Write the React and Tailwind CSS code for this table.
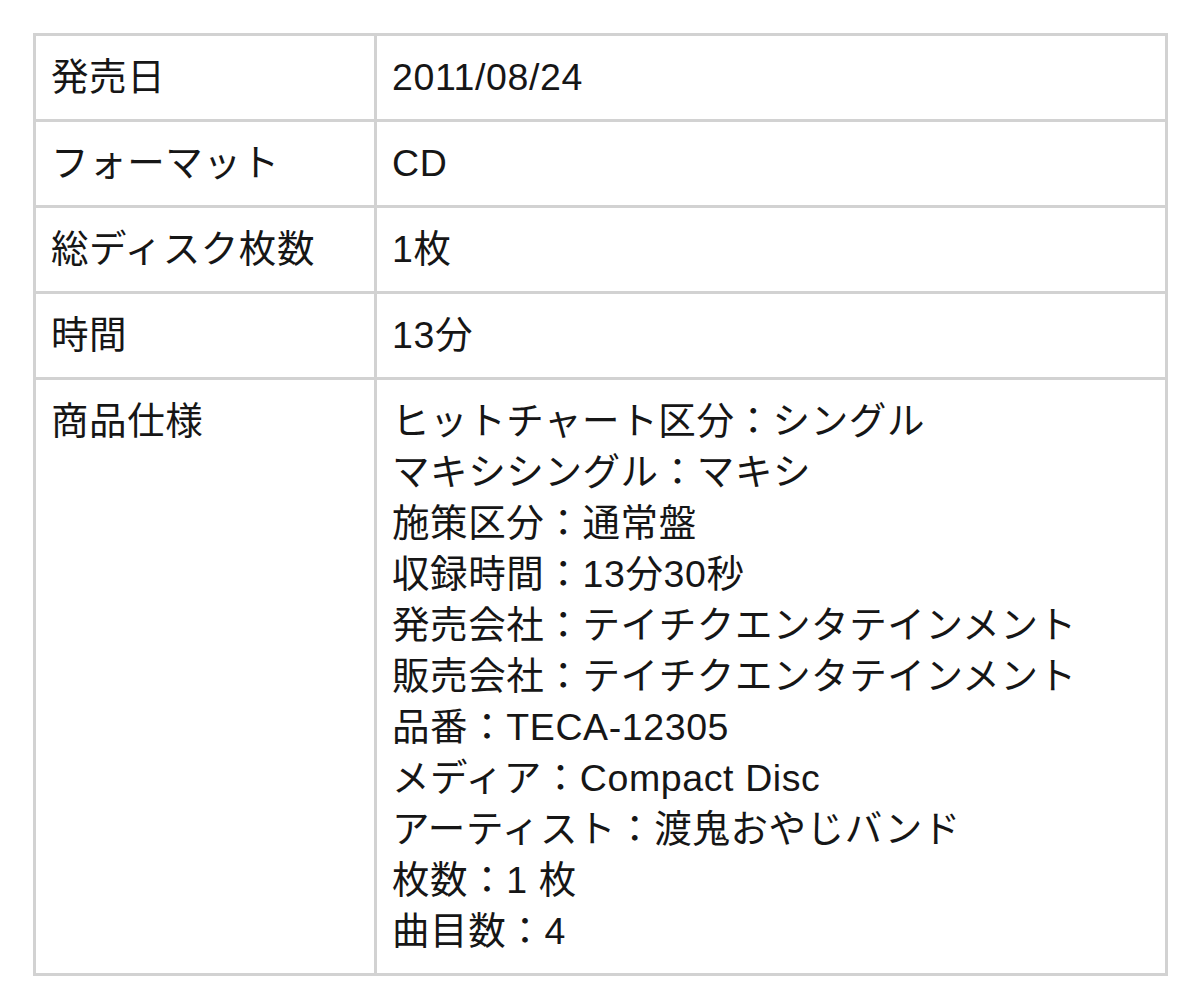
import React from 'react';

const rows = [
  ['発売日', ['2011/08/24']],
  ['フォーマット', ['CD']],
  ['総ディスク枚数', ['1枚']],
  ['時間', ['13分']],
  [
    '商品仕様',
    [
      'ヒットチャート区分：シングル',
      'マキシシングル：マキシ',
      '施策区分：通常盤',
      '収録時間：13分30秒',
      '発売会社：テイチクエンタテインメント',
      '販売会社：テイチクエンタテインメント',
      '品番：TECA-12305',
      'メディア：Compact Disc',
      'アーティスト：渡鬼おやじバンド',
      '枚数：1 枚',
      '曲目数：4',
    ],
  ],
];

const App = () => {
  return (
    <div
      className="bg-white w-[1200px] h-[999px] pt-[33px] pl-[33px] text-[#161616]"
      style={{ fontFamily: '"Liberation Sans", "Noto Sans CJK JP", sans-serif' }}
    >
      <table className="w-[1135px] border-collapse border-[3px] border-[#d2d2d2]">
        <tbody>
          {rows.map(([label, values]) => (
            <tr key={label}>
              <td className="w-[341px] align-top border-[3px] border-[#d2d2d2] pl-[15px] pr-4 py-4 text-[37.5px] leading-[51px] tracking-[0.6px]">
                {label}
              </td>
              <td className="align-top border-[3px] border-[#d2d2d2] pl-[15px] pr-4 py-4 text-[37.5px] leading-[51px] tracking-[0.6px]">
                {values.map((v) => (
                  <div key={v}>{v}</div>
                ))}
              </td>
            </tr>
          ))}
        </tbody>
      </table>
    </div>
  );
};

export default App;
